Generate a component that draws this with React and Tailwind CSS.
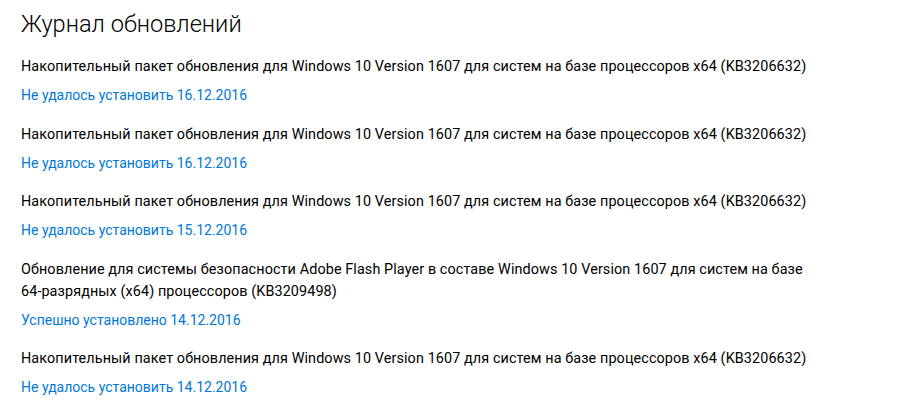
const updates = [
  {
    title: "Накопительный пакет обновления для Windows 10 Version 1607 для систем на базе процессоров x64 (KB3206632)",
    status: "Не удалось установить 16.12.2016",
  },
  {
    title: "Накопительный пакет обновления для Windows 10 Version 1607 для систем на базе процессоров x64 (KB3206632)",
    status: "Не удалось установить 16.12.2016",
  },
  {
    title: "Накопительный пакет обновления для Windows 10 Version 1607 для систем на базе процессоров x64 (KB3206632)",
    status: "Не удалось установить 15.12.2016",
  },
  {
    title: "Обновление для системы безопасности Adobe Flash Player в составе Windows 10 Version 1607 для систем на базе 64\u2011разрядных (x64) процессоров (KB3209498)",
    status: "Успешно установлено 14.12.2016",
  },
  {
    title: "Накопительный пакет обновления для Windows 10 Version 1607 для систем на базе процессоров x64 (KB3206632)",
    status: "Не удалось установить 14.12.2016",
  },
];

export default function App() {
  return (
    <div
      className="w-[903px] h-[416px] bg-white overflow-hidden pl-[21px] pt-[9px] text-black"
      style={{ fontFamily: "Roboto, 'Noto Sans', sans-serif" }}
    >
      {/* Header */}
      <h1 className="text-[23.6px] leading-[30px] font-light">Журнал обновлений</h1>

      {/* History list */}
      <div className="mt-[17px] flex flex-col gap-[17.5px] max-w-[792px]">
        {updates.map((u, i) => (
          <div key={i} className="flex flex-col gap-[6px]">
            <p className="text-[14.4px] leading-[22px] tracking-[0.1px]">{u.title}</p>
            <a href="#" className="text-[14px] leading-[22px] text-[#0078d7]">
              {u.status}
            </a>
          </div>
        ))}
      </div>
    </div>
  );
}
